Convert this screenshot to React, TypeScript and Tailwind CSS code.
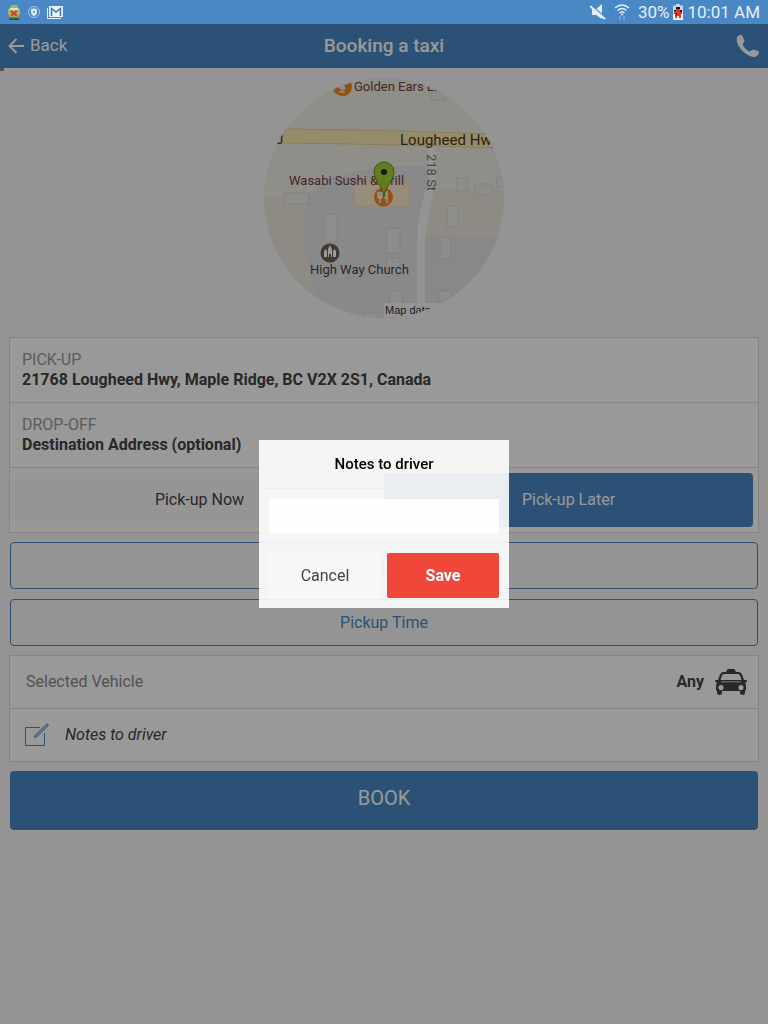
import type { ReactNode } from "react";

const buildings = [
  { x: 167, y: 14, w: 14, h: 8 },
  { x: 193, y: 100, w: 11, h: 13 },
  { x: 211, y: 106, w: 17, h: 11 },
  { x: 233, y: 99, w: 12, h: 10 },
  { x: 183, y: 128, w: 11, h: 21 },
  { x: 176, y: 159, w: 11, h: 22 },
  { x: 175, y: 213, w: 12, h: 11 },
  { x: 20, y: 115, w: 25, h: 11 },
  { x: 60, y: 136, w: 13, h: 28 },
  { x: 123, y: 150, w: 13, h: 25 },
  { x: 123, y: 180, w: 13, h: 17 },
  { x: 126, y: 213, w: 12, h: 13 },
  { x: 100, y: 235, w: 14, h: 8 },
];

function Map() {
  return (
    <svg
      viewBox="0 0 240 240"
      role="img"
      aria-label="Map of the pick-up location"
      className="size-[240px] rounded-full font-[Roboto,sans-serif]"
    >
      <rect width="240" height="240" fill="#efede3" />
      <path d="M0 120H42V240H0zM172 112H240V160H160z" fill="#ece8dc" />
      <path
        d="M40 240V140Q42 108 72 98L120 88H166V112L156 150V240z"
        fill="#e4e4e4"
      />
      <path d="M10 122H38V160L54 226Q20 200 10 122z" fill="#ece8dc" />
      <path d="M158 160H240V240H150z" fill="#e3e3e3" />
      <path d="M168 68V106Q157 136 157 168V240" fill="none" stroke="#f7f7f7" strokeWidth="8" />
      <path d="M21 51Q120 52 228 56L236 70Q120 66 17 65z" fill="#fae9b1" stroke="#e6d08e" />
      <g fill="#ececea" stroke="#d6d6d2">
        {buildings.map((b) => (
          <rect key={`${b.x}-${b.y}`} x={b.x} y={b.y} width={b.w} height={b.h} />
        ))}
      </g>
      <rect x="90" y="104" width="55" height="24" fill="#fdeccf" stroke="#f3dcb2" />

      <path
        d="M69 9.500L74 8Q76 12 79 12T81 9L80 7 87 4Q90 12 84 16.500 79 20 73.500 16.500 69 14 69 9.500z"
        fill="#f98a20"
      />
      <path d="M75 14h6M78 12v3" stroke="#ffe2c2" strokeWidth="1.500" />
      <text x="90" y="13" fontSize="13" fill="#733f3f">Golden Ears L.</text>
      <path d="M163 0H178V9H163z" fill="#f7f7f7" />
      <text x="136" y="67" fontSize="15" fill="#4b3820">Lougheed Hwy</text>
      <text x="12" y="66" fontSize="13" fill="#4b3820">J</text>
      <text x="163" y="76" fontSize="13" fill="#777" transform="rotate(90 163 76)">218 St</text>
      <text x="25" y="107" fontSize="13" fill="#733f3f">Wasabi Sushi &amp; Grill</text>

      <circle cx="119.500" cy="119" r="9.500" fill="#f98a20" />
      <path
        d="M114 114v4q0 2 2 2t2-2v-4M116 114v11M123 125v-11q-3 2-2 6h2"
        fill="none"
        stroke="#fff"
        strokeWidth="1.500"
      />
      <path
        d="M120 119C119 108 110 103 110 94a10 10 0 0 1 20 0C130 103 121 108 120 119z"
        fill="#a3cf35"
        stroke="#6b8b20"
      />
      <circle cx="120" cy="94" r="3" fill="#222c08" />

      <circle cx="66" cy="175" r="9.500" fill="#715a55" />
      <path d="M60 179v-6l1.500-2 1.500 2v6zM64 179v-8l2-4 2 4v8h-1v-3h-2v3zM69 179v-6l1.500-2 1.500 2v6z" fill="#fff" />
      <text x="46" y="196" fontSize="13" fill="#444">High Way Church</text>
      <rect x="120" y="225" width="65" height="15" fill="#f7f7f7" />
      <text x="121" y="236" fontSize="11" fill="#333" className="font-['Liberation_Sans',sans-serif]">
        Map data ©
      </text>
    </svg>
  );
}

function TaxiIcon() {
  return (
    <svg viewBox="0 0 32 26" className="h-[26px] w-8" fill="#444" aria-hidden="true">
      <path d="M11 3l1-2q.5-1 1.500-1h5q1 0 1.500 1l1 2z" />
      <path
        fillRule="evenodd"
        d="M8 3h16q2 0 3 2.500l2 5.500h2q1 0 1 1t-1 1.200l-1 .3q1 1.500 1 3.500v4.500h-1V24q0 2-2.500 2T25 24v-2H7v2q0 2-2.500 2T2 24v-2.500H1V17q0-2 1-3.500l-1-.3Q0 13 0 12t1-1h2l2-5.500Q6 3 8 3zM9 5q-1.500 0-2 1.500L5.500 11h21L25 6.500Q24.500 5 23 5zM6 16a2.600 2.600 0 1 0 .01 0zM26 16a2.600 2.600 0 1 0 .01 0zM6 12.500v.8h20v-.8z"
      />
    </svg>
  );
}

function ComposeIcon() {
  return (
    <svg viewBox="0 0 24 24" className="size-6" fill="none" stroke="#4a87c5" aria-hidden="true">
      <path d="M15 4.500H.5v18h19V10" />
      <path d="M9.500 14.500l1-2.500L22 .8l1.500 1.500L12 13.500z" fill="#4a87c5" fillOpacity=".4" />
    </svg>
  );
}

function StatusBar() {
  return (
    <div className="flex h-6 items-center justify-between bg-[#4a87c5] pr-2 pl-[7px] text-[#e3f0fc]">
      <div className="flex items-center gap-[7px]">
        <svg viewBox="0 0 14 15" className="h-[15px] w-[14px]" aria-hidden="true">
          <path d="M2 14h10" stroke="#254b57" strokeWidth="2" />
          <path d="M4 0h6l1 3 2 1v5l-2 3H3L1 9V4l2-1z" fill="#a9b565" />
          <path d="M3 3h8v2H3z" fill="#dbe8bd" />
          <path d="M4 6l6 5M10 6l-6 5" stroke="#c5412e" strokeWidth="2" />
          <path d="M2 13h10" stroke="#58803f" />
        </svg>
        <svg viewBox="0 0 12 12" className="size-3" aria-hidden="true">
          <circle cx="6" cy="6" r="5.500" fill="none" stroke="#a5cdef" />
          <path d="M3 3q3 0 3-1 0 1 3 1v3q0 3-3 4-3-1-3-4z" fill="#d9ecfc" />
          <path d="M5 5h2L6 8z" fill="#4a87c5" />
        </svg>
        <svg viewBox="0 0 16 13" className="h-[13px] w-4" aria-hidden="true">
          <path d="M.5 2v10.500H14" fill="none" stroke="#e3f0fc" />
          <path d="M2 0h14v11H2z" fill="#e3f0fc" />
          <path d="M4.500 10V2.500L9 6l4.500-3.500V10" fill="none" stroke="#4a77a5" strokeWidth="1.500" />
        </svg>
      </div>
      <div className="flex items-center text-[17px] leading-6">
        <svg viewBox="0 0 16 16" className="mr-2 size-4" aria-hidden="true">
          <path d="M2 5h4l6-5v15l-6-4H2z" fill="#e3f0fc" />
          <path d="M1 1l14 12" stroke="#4a87c5" strokeWidth="1.500" />
          <path d="M0 2l15 13" stroke="#e3f0fc" strokeWidth="2" />
        </svg>
        <svg viewBox="0 0 16 16" className="mr-2 size-4" fill="none" stroke="#e3f0fc" strokeWidth="1.500" aria-hidden="true">
          <path d="M1 4q7-6 14 0M3.500 6.500q4.500-4 9 0M5.500 9q2.500-2 5 0" />
          <path d="M7 10.500h2" />
          <path d="M6 12v4M10 12v4" stroke="#79abdc" />
        </svg>
        <span>30%</span>
        <svg viewBox="0 0 10 16" className="mr-[5px] ml-[3px] h-4 w-[10px]" aria-hidden="true">
          <path d="M3 0h4v1.500h3V16H0V1.500h3z" fill="#bfd6e6" />
          <path d="M0 10h10v6H0z" fill="#f4f4f4" />
          <path d="M3 3h4v3h2v4H8v4H6v-2H4v2H2v-4H1V6h2z" fill="#e3351f" />
          <path d="M3 3h4v2H3zM1 6h2v1H1zM7 6h2v2H7zM3 9h1v2H3z" fill="#2b1212" />
        </svg>
        <span>10:01 AM</span>
      </div>
    </div>
  );
}

function Header() {
  return (
    <header className="grid h-11 grid-cols-3 items-center bg-[#4a87c5] px-2 text-white">
      <button type="button" className="flex items-center gap-[6px] justify-self-start text-[17px]">
        <svg viewBox="0 0 16 16" className="size-4" fill="none" stroke="currentColor" strokeWidth="2" aria-hidden="true">
          <path d="M16 8H2M8.500 1L1.500 8l7 7" />
        </svg>
        Back
      </button>
      <h1 className="text-center text-[19px] font-medium">Booking a taxi</h1>
      <button type="button" aria-label="Call" className="justify-self-end">
        <svg viewBox="0 0 24 24" className="size-6" fill="currentColor" aria-hidden="true">
          <path d="M1 3Q3 .5 5 1q1.200.2 1.800 1.800l1.400 3.400q.6 1.800-.8 2.800-1 1-.4 2.200 2.200 4 5.800 6 1.200.6 2-.2Q16 15.500 17.500 15.800l4 .8q2 .6 1.300 2.600Q21.500 22.500 18 23 12.500 23 6 16.500-.5 9.500 1 3z" />
        </svg>
      </button>
    </header>
  );
}

function Card({ children }: { children: ReactNode }) {
  return (
    <div className="-m-px divide-y divide-[#ddd] border border-[#ddd] bg-white">{children}</div>
  );
}

function AddressRow({ label, value }: { label: string; value: string }) {
  return (
    <div className="p-3 leading-5">
      <p className="text-[#999]">{label}</p>
      <p className="font-bold">{value}</p>
    </div>
  );
}

function OutlineButton({ children }: { children: ReactNode }) {
  return (
    <button type="button" className="h-[47px] rounded-sm border border-[#4a87c5] text-[#4a87c5]">
      {children}
    </button>
  );
}

function NotesDialog() {
  return (
    <div className="fixed inset-x-0 top-6 bottom-0 flex items-center justify-center bg-black/40">
      <div role="dialog" aria-labelledby="notes-title" className="w-[250px] bg-white/90">
        <h2
          id="notes-title"
          className="border-b border-[#eee] p-[15px] text-center text-[15px] leading-[18px] font-medium text-black"
        >
          Notes to driver
        </h2>
        <div className="p-[10px]">
          <input
            type="text"
            aria-labelledby="notes-title"
            className="block h-[34px] w-full bg-white/95 px-2 outline-none"
          />
        </div>
        <div className="grid grid-cols-2 gap-[6px] p-[10px]">
          <button type="button" className="h-[45px] rounded-xs bg-[#f8f8f8]/90">
            Cancel
          </button>
          <button type="button" className="h-[45px] rounded-xs bg-[#ef473a] font-bold text-white">
            Save
          </button>
        </div>
      </div>
    </div>
  );
}

export default function App() {
  return (
    <div className="min-h-screen bg-[#f7f7f7] font-[Roboto,sans-serif] text-base text-[#444]">
      <StatusBar />
      <Header />
      <div className="h-[3px] w-1 bg-[#888]" />
      <main className="flex flex-col gap-[10px] px-[10px] pt-[7px]">
        <div className="mb-[10px] flex justify-center">
          <Map />
        </div>
        <Card>
          <AddressRow label="PICK-UP" value="21768 Lougheed Hwy, Maple Ridge, BC V2X 2S1, Canada" />
          <AddressRow label="DROP-OFF" value="Destination Address (optional)" />
          <div className="grid grid-cols-2 p-[5px]">
            <button type="button" className="h-[54px] rounded-l-sm bg-[#f8f8f8]">
              Pick-up Now
            </button>
            <button type="button" className="h-[54px] rounded-r-sm bg-[#4a87c5] text-white">
              Pick-up Later
            </button>
          </div>
        </Card>
        <OutlineButton>Pickup Date</OutlineButton>
        <OutlineButton>Pickup Time</OutlineButton>
        <Card>
          <div className="flex h-[53px] items-center pr-[11px] pl-4">
            <span className="text-[#888]">Selected Vehicle</span>
            <span className="mr-[11px] ml-auto font-bold">Any</span>
            <TaxiIcon />
          </div>
          <button type="button" className="flex h-[52px] w-full items-center gap-4 px-[15px] italic">
            <ComposeIcon />
            Notes to driver
          </button>
        </Card>
        <button type="button" className="h-[59px] rounded-sm bg-[#4a87c5] pb-[5px] text-xl text-white">
          BOOK
        </button>
      </main>
      <NotesDialog />
    </div>
  );
}
